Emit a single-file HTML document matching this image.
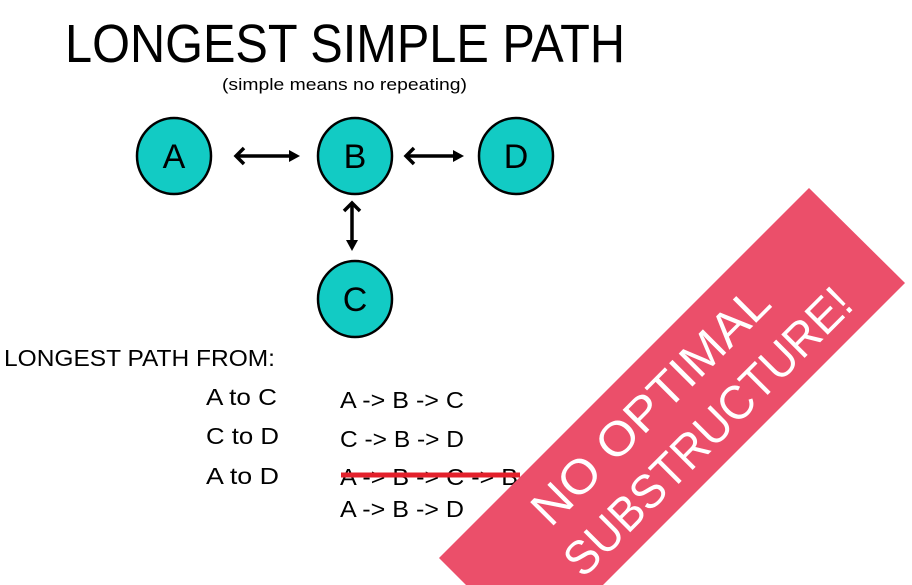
<!DOCTYPE html>
<html><head><meta charset="utf-8"><style>
html,body{margin:0;padding:0;background:#fff;width:912px;height:585px;overflow:hidden}
svg{display:block}
text{font-family:"Liberation Sans",sans-serif;fill:#000}
</style></head><body>
<svg width="912" height="585" viewBox="0 0 912 585" xmlns="http://www.w3.org/2000/svg">
<text x="65" y="62" font-size="54" textLength="560" lengthAdjust="spacingAndGlyphs">LONGEST SIMPLE PATH</text>
<text x="222" y="90" font-size="17" textLength="245" lengthAdjust="spacingAndGlyphs">(simple means no repeating)</text>
<g fill="#12cbc4" stroke="#000" stroke-width="2.5">
<ellipse cx="174" cy="156" rx="37" ry="38"/>
<ellipse cx="355" cy="156" rx="37" ry="38"/>
<ellipse cx="516" cy="156" rx="37" ry="38"/>
<ellipse cx="355" cy="299" rx="37" ry="38"/>
</g>
<g font-size="34" text-anchor="middle">
<text x="174" y="168">A</text><text x="355" y="168">B</text><text x="516" y="168">D</text><text x="355" y="311">C</text>
</g>
<g stroke="#000" stroke-width="3.5" fill="none">
<line x1="236" y1="156" x2="294" y2="156"/><polyline points="244,148 236,156 244,164"/>
<line x1="406" y1="156" x2="458" y2="156"/><polyline points="414,148 406,156 414,164"/>
<line x1="352" y1="203" x2="352" y2="244"/><polyline points="344,211 352,203 360,211"/>
</g>
<g fill="#000"><polygon points="300,156 289,150 289,162"/><polygon points="464,156 453,150 453,162"/><polygon points="352,251 346,240 358,240"/></g>
<text x="4" y="366" font-size="23" textLength="271" lengthAdjust="spacingAndGlyphs">LONGEST PATH FROM:</text>
<g font-size="23">
<text x="206" y="405" textLength="71" lengthAdjust="spacingAndGlyphs">A to C</text>
<text x="206" y="444" textLength="73" lengthAdjust="spacingAndGlyphs">C to D</text>
<text x="206" y="484" textLength="73" lengthAdjust="spacingAndGlyphs">A to D</text>
<text x="340" y="408" textLength="124" lengthAdjust="spacingAndGlyphs">A -&gt; B -&gt; C</text>
<text x="340" y="447" textLength="124" lengthAdjust="spacingAndGlyphs">C -&gt; B -&gt; D</text>
<text x="340" y="485" textLength="178" lengthAdjust="spacingAndGlyphs">A -&gt; B -&gt; C -&gt; B</text>
<text x="340" y="517" textLength="124" lengthAdjust="spacingAndGlyphs">A -&gt; B -&gt; D</text>
</g>
<line x1="341" y1="475" x2="520" y2="475" stroke="#e3202b" stroke-width="5"/>
<polygon points="809,188 905,283 603,585 466,585 439,558" fill="#eb4f6a"/>
<g transform="translate(650,405) rotate(-45)" font-size="48" text-anchor="middle">
<text x="0" y="17" style="fill:#fff" textLength="315" lengthAdjust="spacingAndGlyphs">NO OPTIMAL</text>
<text x="22" y="76" style="fill:#fff" textLength="385" lengthAdjust="spacingAndGlyphs">SUBSTRUCTURE!</text>
</g>
</svg>
</body></html>
